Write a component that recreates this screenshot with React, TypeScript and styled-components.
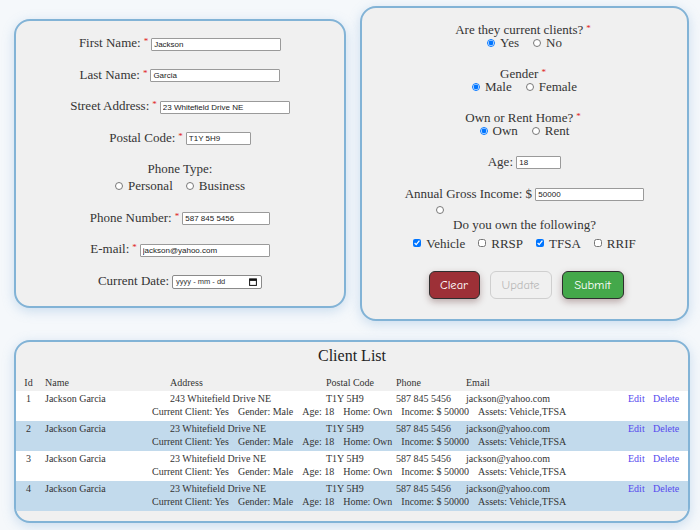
import React from "react";
import styled, { createGlobalStyle } from "styled-components";

const Global = createGlobalStyle`
  html, body { margin: 0; padding: 0; }
  body {
    background: #f5f8fb;
    font-family: "Liberation Serif", "Times New Roman", serif;
    color: #343434;
  }
`;

const Page = styled.div`
  padding: 6px 11px 10px 14px;
  width: 700px;
  box-sizing: border-box;
`;

const TopRow = styled.div`
  display: flex;
  align-items: center;
  gap: 14px;
`;

const Card = styled.div<{ $w: number }>`
  box-sizing: border-box;
  width: ${(p) => p.$w}px;
  background: #f0f0f0;
  border: 2px solid #82b3d6;
  border-radius: 16px;
  box-shadow: 0 3px 12px rgba(120, 170, 215, 0.35);
`;

const LeftCard = styled(Card)`
  padding: 13px 0 17px;
  display: flex;
  flex-direction: column;
  gap: 14.5px;
  font-size: 13px;
`;

const RightCard = styled(Card)`
  padding: 15px 0 20px;
  display: flex;
  flex-direction: column;
  font-size: 13px;
`;

const Row = styled.div`
  line-height: 17px;
  height: 17px;
  text-align: center;
  white-space: nowrap;
`;

const Req = styled.span`
  color: #e01818;
  font-size: 9px;
  line-height: 1;
  vertical-align: 3px;
  margin: 0 3px;
`;

const TextInput = styled.input<{ $w: number }>`
  box-sizing: border-box;
  width: ${(p) => p.$w}px;
  height: 13px;
  padding: 0 2px;
  border: 1px solid #9a9a9a;
  border-radius: 1px;
  background: #fff;
  font-family: "Liberation Sans", Arial, sans-serif;
  font-size: 8px;
  color: #222;
  vertical-align: middle;
  outline: none;
`;

const DateBox = styled.span`
  box-sizing: border-box;
  display: inline-flex;
  align-items: center;
  justify-content: space-between;
  width: 90px;
  height: 14px;
  padding: 0 4px 0 3px;
  margin-left: 3px;
  border: 1px solid #8a8a8a;
  border-radius: 2px;
  background: #fff;
  font-family: "Liberation Sans", Arial, sans-serif;
  font-size: 7.5px;
  color: #333;
  vertical-align: middle;
  line-height: 12px;
`;

const Options = styled.div<{ $gap: number; $lh: number; $mt?: number }>`
  display: flex;
  justify-content: center;
  align-items: center;
  gap: ${(p) => p.$gap}px;
  line-height: ${(p) => p.$lh}px;
  height: ${(p) => p.$lh}px;
  margin-top: ${(p) => p.$mt ?? 0}px;
`;

const Opt = styled.label`
  display: inline-flex;
  align-items: center;
  gap: 5px;
`;

const Radio = styled.input.attrs({ type: "radio" })`
  width: 8px;
  height: 8px;
  margin: 0;
`;

const Check = styled.input.attrs({ type: "checkbox" })`
  width: 8px;
  height: 8px;
  margin: 0;
`;

const Question = styled.div<{ $mt?: number }>`
  margin-top: ${(p) => p.$mt ?? 0}px;
  text-align: center;
  line-height: 13px;
`;

const QLabel = styled.div`
  height: 13px;
  line-height: 13px;
  white-space: nowrap;
`;

const Field = styled(Row)<{ $mt: number }>`
  margin-top: ${(p) => p.$mt}px;
`;

const Stray = styled.div`
  margin-top: 4.5px;
  height: 8px;
  padding-left: 74px;
  display: flex;
  align-items: center;
`;

const ButtonRow = styled.div`
  margin-top: 19.5px;
  display: flex;
  justify-content: center;
  gap: 10px;
  padding-left: 3px;
`;

const Button = styled.button<{ $variant: "clear" | "update" | "submit"; $w: number }>`
  box-sizing: border-box;
  width: ${(p) => p.$w}px;
  height: 28px;
  border-radius: 6px;
  font-family: "Comic Sans MS", "Comic Neue", cursive;
  font-size: 12.5px;
  padding: 0;
  cursor: pointer;
  color: ${(p) => (p.$variant === "update" ? "#b9b9b9" : "#fff")};
  background: ${(p) =>
    p.$variant === "clear" ? "#9d3037" : p.$variant === "submit" ? "#44a84a" : "transparent"};
  border: 1px solid ${(p) => (p.$variant === "update" ? "#cfcfcf" : "#2e2e2e")};
  box-shadow: ${(p) =>
    p.$variant === "update" ? "none" : "0 3px 7px rgba(90, 40, 40, 0.35)"};
`;

const TableCard = styled(Card)`
  margin-top: 19px;
  padding: 0 0 10px;
  font-size: 10px;
`;

const Title = styled.div`
  text-align: center;
  font-size: 16px;
  line-height: 28px;
  color: #222;
`;

const Grid = styled.div<{ $head?: boolean; $alt?: boolean }>`
  display: grid;
  grid-template-columns: 29px 125px 156px 70px 70px 162px 25px 1fr;
  line-height: 13px;
  background: ${(p) => (p.$head ? "transparent" : p.$alt ? "#c2daec" : "#ffffff")};
  padding: ${(p) => (p.$head ? "2.5px 0" : "1px 0 3px")};
  margin-top: ${(p) => (p.$head ? "3px" : "0")};
  white-space: nowrap;
`;

const IdCell = styled.span`
  text-align: center;
  padding-right: 4px;
`;

const Cell = styled.span``;

const Action = styled.a`
  color: #5648ee;
  cursor: pointer;
`;

const Details = styled.div`
  grid-column: 2 / 8;
  padding-left: 107px;
  display: flex;
  gap: 9px;
`;

const CalendarIcon = () => (
  <svg width="8" height="8" viewBox="0 0 8 8" aria-hidden>
    <rect x="0.6" y="0.9" width="6.8" height="6.5" fill="none" stroke="#111" strokeWidth="1" />
    <rect x="0.6" y="0.9" width="6.8" height="2" fill="#111" />
  </svg>
);

type Client = { id: number; address: string };
const clients: Client[] = [
  { id: 1, address: "243 Whitefield Drive NE" },
  { id: 2, address: "23 Whitefield Drive NE" },
  { id: 3, address: "23 Whitefield Drive NE" },
  { id: 4, address: "23 Whitefield Drive NE" },
];

export default function App() {
  return (
    <Page>
      <Global />
      <TopRow>
        <LeftCard $w={332}>
          <Row>
            First Name:<Req>*</Req>
            <TextInput $w={130} defaultValue="Jackson" />
          </Row>
          <Row>
            Last Name:<Req>*</Req>
            <TextInput $w={130} defaultValue="Garcia" />
          </Row>
          <Row>
            Street Address:<Req>*</Req>
            <TextInput $w={130} defaultValue="23 Whitefield Drive NE" />
          </Row>
          <Row>
            Postal Code:<Req>*</Req>
            <TextInput $w={65} defaultValue="T1Y 5H9" />
          </Row>
          <div>
            <Row>Phone Type:</Row>
            <Options $gap={13} $lh={17}>
              <Opt>
                <Radio name="ptype" />
                Personal
              </Opt>
              <Opt>
                <Radio name="ptype" />
                Business
              </Opt>
            </Options>
          </div>
          <Row>
            Phone Number:<Req>*</Req>
            <TextInput $w={88} defaultValue="587 845 5456" />
          </Row>
          <Row>
            E-mail:<Req>*</Req>
            <TextInput $w={130} defaultValue="jackson@yahoo.com" />
          </Row>
          <Row>
            Current Date:
            <DateBox>
              <span>yyyy - mm - dd</span>
              <CalendarIcon />
            </DateBox>
          </Row>
        </LeftCard>

        <RightCard $w={329}>
          <Question>
            <QLabel>
              Are they current clients?<Req>*</Req>
            </QLabel>
            <Options $gap={14} $lh={13}>
              <Opt>
                <Radio name="cur" defaultChecked />
                Yes
              </Opt>
              <Opt>
                <Radio name="cur" />
                No
              </Opt>
            </Options>
          </Question>
          <Question $mt={18}>
            <QLabel>
              Gender<Req>*</Req>
            </QLabel>
            <Options $gap={14} $lh={13}>
              <Opt>
                <Radio name="gender" defaultChecked />
                Male
              </Opt>
              <Opt>
                <Radio name="gender" />
                Female
              </Opt>
            </Options>
          </Question>
          <Question $mt={18}>
            <QLabel>
              Own or Rent Home?<Req>*</Req>
            </QLabel>
            <Options $gap={14} $lh={13}>
              <Opt>
                <Radio name="home" defaultChecked />
                Own
              </Opt>
              <Opt>
                <Radio name="home" />
                Rent
              </Opt>
            </Options>
          </Question>
          <Field $mt={15.5}>
            Age: <TextInput $w={45} defaultValue="18" />
          </Field>
          <Field $mt={15}>
            Annual Gross Income: $ <TextInput $w={109} defaultValue="50000" />
          </Field>
          <Stray>
            <Radio name="stray" />
          </Stray>
          <Question $mt={3.5}>
            <QLabel>Do you own the following?</QLabel>
          </Question>
          <Options $gap={13} $lh={17} $mt={4}>
            <Opt>
              <Check defaultChecked />
              Vehicle
            </Opt>
            <Opt>
              <Check />
              RRSP
            </Opt>
            <Opt>
              <Check defaultChecked />
              TFSA
            </Opt>
            <Opt>
              <Check />
              RRIF
            </Opt>
          </Options>
          <ButtonRow>
            <Button $variant="clear" $w={51}>Clear</Button>
            <Button $variant="update" $w={62} disabled>Update</Button>
            <Button $variant="submit" $w={62}>Submit</Button>
          </ButtonRow>
        </RightCard>
      </TopRow>

      <TableCard $w={676}>
        <Title>Client List</Title>
        <Grid $head>
          <IdCell>Id</IdCell>
          <Cell>Name</Cell>
          <Cell>Address</Cell>
          <Cell>Postal Code</Cell>
          <Cell>Phone</Cell>
          <Cell>Email</Cell>
          <Cell />
          <Cell />
        </Grid>
        {clients.map((c, i) => (
          <Grid key={c.id} $alt={i % 2 === 1}>
            <IdCell>{c.id}</IdCell>
            <Cell>Jackson Garcia</Cell>
            <Cell>{c.address}</Cell>
            <Cell>T1Y 5H9</Cell>
            <Cell>587 845 5456</Cell>
            <Cell>jackson@yahoo.com</Cell>
            <Action>Edit</Action>
            <Action>Delete</Action>
            <Details>
              <span>Current Client: Yes</span>
              <span>Gender: Male</span>
              <span>Age: 18</span>
              <span>Home: Own</span>
              <span>Income: $ 50000</span>
              <span>Assets: Vehicle,TFSA</span>
            </Details>
          </Grid>
        ))}
      </TableCard>
    </Page>
  );
}
